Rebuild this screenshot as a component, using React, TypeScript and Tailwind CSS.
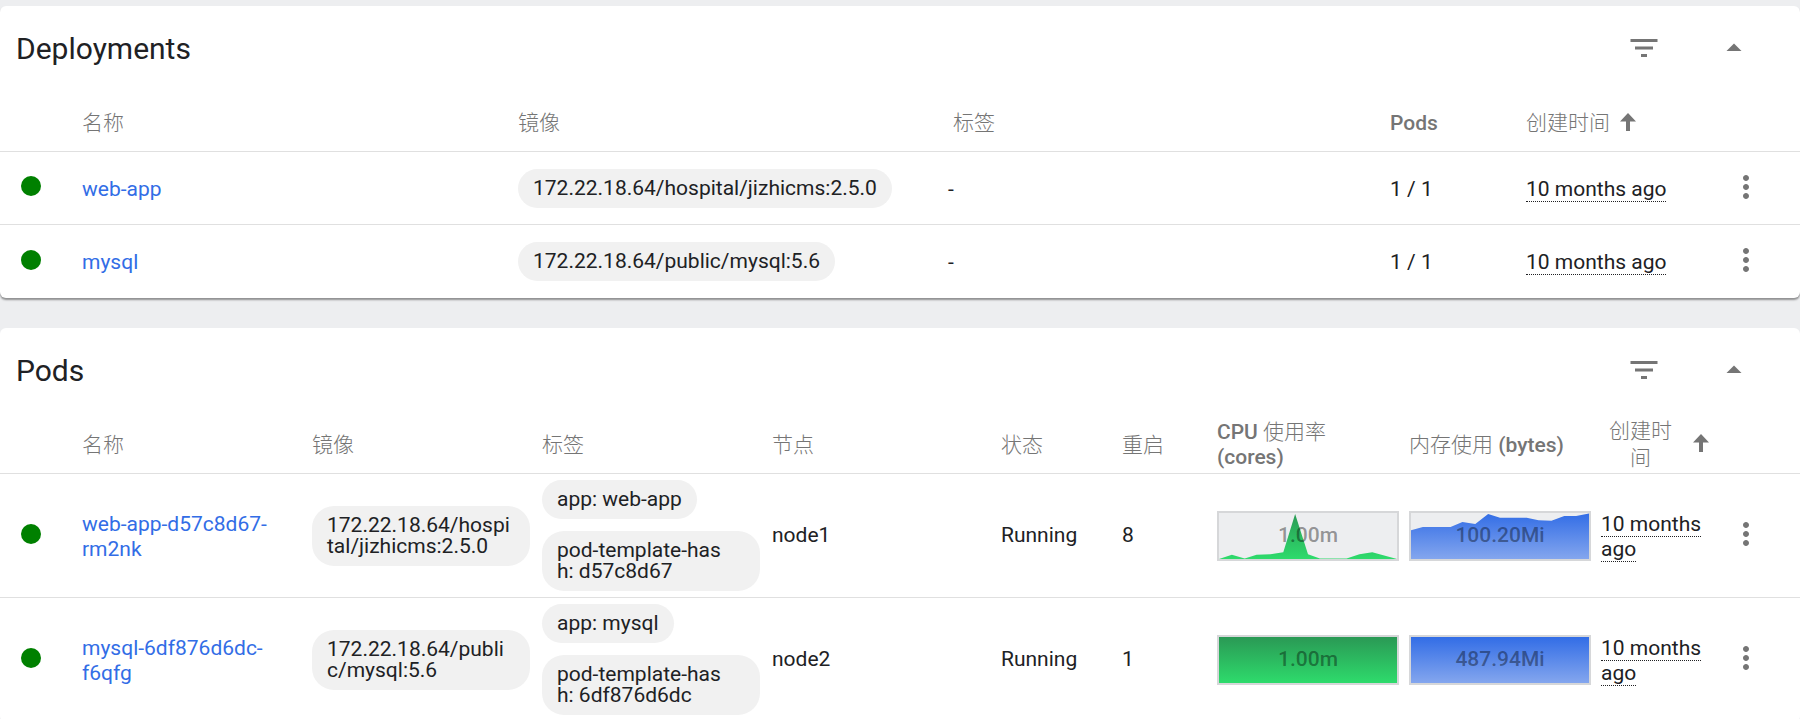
const dividerCls = "border-b border-[#e0e0e0]";
const headCls = "font-medium text-[#757575] pt-[2px]";

const cpuPoints = "0,48 0,48 13,43.5 26,47.5 38,43.5 52,43 65,41 77,1 90,43 102,47.5 129,47.5 142,43 155,41 180,48";
const memPoints = "0,48 0,18 12,14.5 40,14.5 52,9.5 65,11.5 78,1 90,5 117,5 129,7.5 142,8 155,3 167,3 180,0.5 180,48";

function Cjk({ children }: { children: React.ReactNode }) {
  return <span className="font-light">{children}</span>;
}

function Icon({ d, size = 36, className = "" }: { d: string; size?: number; className?: string }) {
  return (
    <svg width={size} height={size} viewBox="0 0 24 24" fill="#757575" className={className}>
      <path d={d} />
    </svg>
  );
}

function SortArrow() {
  return (
    <svg width="16" height="18" viewBox="0 0 16 18" fill="#757575" className="shrink-0 mb-[4px]">
      <path d="M8 0 L16 8.5 H10 V18 H6 V8.5 H0 Z" />
    </svg>
  );
}

function Kebab() {
  return (
    <div className="flex items-center justify-center w-[60px] pb-[3px]">
      <Icon d="M12 8c1.1 0 2-.9 2-2s-.9-2-2-2-2 .9-2 2 .9 2 2 2zm0 2c-1.1 0-2 .9-2 2s.9 2 2 2 2-.9 2-2-.9-2-2-2zm0 6c-1.1 0-2 .9-2 2s.9 2 2 2 2-.9 2-2-.9-2-2-2z" />
    </div>
  );
}

function Dot() {
  return (
    <div className="pl-[21px] pb-[4px]">
      <div className="w-5 h-5 rounded-full bg-[#008000]" />
    </div>
  );
}

function Chip({ children, long }: { children: React.ReactNode; long?: boolean }) {
  return (
    <div className={`${long ? "w-full" : "w-fit"} max-w-full rounded-[22px] bg-[#f1f1f1] px-[15px] py-[9px] text-[21px] leading-[21px] text-[#202124] break-all`}>
      <div className={long ? "max-w-[172px]" : ""}>{children}</div>
    </div>
  );
}

function Ago() {
  return <span className="border-b border-dotted border-[#202124]">10 months ago</span>;
}

function Spark({ value, kind, points }: { value: string; kind: "cpu" | "mem"; points: string }) {
  const id = `${kind}-${value}`;
  const top = kind === "cpu" ? "#2a9955" : "#326de6";
  const bottom = kind === "cpu" ? "#2edb6c" : "#84a6ee";
  return (
    <div className="relative w-[182px] h-[50px] border-2 border-[#d6d7d9] bg-[#edeef0]">
      <svg viewBox="0 0 180 48" preserveAspectRatio="none" className="w-full h-full block">
        <defs>
          <linearGradient id={id} x1="0" y1="0" x2="0" y2="48" gradientUnits="userSpaceOnUse">
            <stop offset="0" stopColor={top} />
            <stop offset="1" stopColor={bottom} />
          </linearGradient>
        </defs>
        <polygon points={points} fill={`url(#${id})`} />
      </svg>
      <div className="absolute inset-0 flex items-center justify-center font-medium text-[21px] text-black/40">{value}</div>
    </div>
  );
}

function CardTitle({ title }: { title: string }) {
  return (
    <div className="flex h-[88px] items-center justify-between pl-4 pb-1">
      <div className="pt-[2px] text-[30px] leading-[36px] text-[#202124]">{title}</div>
      <div className="flex items-center">
        <Icon d="M10 18h4v-2h-4v2zM3 6v2h18V6H3zm3 7h12v-2H6v2z" />
        <Icon className="ml-[54px] mr-[48px]" d="M7 14l5-5 5 5z" />
      </div>
    </div>
  );
}

const deployCols = "grid grid-cols-[82px_436px_430px_442px_136px_190px_1fr] items-center";

function DeploymentRow({ name, image, last }: { name: string; image: string; last?: boolean }) {
  return (
    <div className={`${deployCols} h-[73px] ${last ? "" : dividerCls}`}>
      <Dot />
      <div className="pt-[2px] text-[#326de6]">{name}</div>
      <div><Chip>{image}</Chip></div>
      <div className="pt-[2px]">-</div>
      <div className="pt-[2px]">1 / 1</div>
      <div className="pt-[2px]"><Ago /></div>
      <Kebab />
    </div>
  );
}

const podCols = "grid grid-cols-[82px_230px_230px_230px_229px_121px_95px_192px_192px_115px_1fr] items-center";

function PodRow({ name, image, labels, node, restarts, cpu, mem, cpuPts, memPts }: {
  name: string; image: string; labels: string[]; node: string; restarts: string;
  cpu: string; mem: string; cpuPts: string; memPts: string;
}) {
  return (
    <div className={`${podCols} h-[124px] ${dividerCls}`}>
      <Dot />
      <div className="text-[#326de6] pt-[2px] pr-3">{name}</div>
      <div className="pr-3"><Chip>{image}</Chip></div>
      <div className="flex flex-col gap-3 pr-3">
        {labels.map((l) => <Chip key={l} long={l.length > 20}>{l}</Chip>)}
      </div>
      <div>{node}</div>
      <div>Running</div>
      <div>{restarts}</div>
      <Spark value={cpu} kind="cpu" points={cpuPts} />
      <Spark value={mem} kind="mem" points={memPts} />
      <div className="pt-[2px] pr-2"><Ago /></div>
      <Kebab />
    </div>
  );
}

export default function App() {
  return (
    <div className="h-[719px] overflow-hidden bg-[#edeef0] pt-[6px] text-[21px] leading-[25px] text-[#202124] font-['Roboto','Noto_Sans_CJK_SC',sans-serif]">
      <div className="rounded-md bg-white shadow-[0_2px_2px_rgba(0,0,0,0.4)]">
        <CardTitle title="Deployments" />
        <div className={`${deployCols} h-[58px] ${dividerCls} ${headCls}`}>
          <div />
          <div><Cjk>名称</Cjk></div>
          <div><Cjk>镜像</Cjk></div>
          <div className="pl-[5px]"><Cjk>标签</Cjk></div>
          <div>Pods</div>
          <div className="flex items-center gap-[10px]"><Cjk>创建时间</Cjk><SortArrow /></div>
          <div />
        </div>
        <DeploymentRow name="web-app" image="172.22.18.64/hospital/jizhicms:2.5.0" />
        <DeploymentRow name="mysql" image="172.22.18.64/public/mysql:5.6" last />
      </div>

      <div className="mt-[30px] rounded-md bg-white">
        <CardTitle title="Pods" />
        <div className={`${podCols} h-[58px] ${dividerCls} ${headCls}`}>
          <div />
          <div><Cjk>名称</Cjk></div>
          <div><Cjk>镜像</Cjk></div>
          <div><Cjk>标签</Cjk></div>
          <div><Cjk>节点</Cjk></div>
          <div><Cjk>状态</Cjk></div>
          <div><Cjk>重启</Cjk></div>
          <div className="pr-3">CPU <Cjk>使用率</Cjk> (cores)</div>
          <div><Cjk>内存使用</Cjk> (bytes)</div>
          <div className="flex items-center gap-[21px] pl-2">
            <div className="w-[63px] text-center leading-[27px]"><Cjk>创建时间</Cjk></div>
            <SortArrow />
          </div>
          <div />
          <div />
        </div>
        <PodRow name="web-app-d57c8d67-rm2nk" image="172.22.18.64/hospital/jizhicms:2.5.0"
          labels={["app: web-app", "pod-template-hash: d57c8d67"]} node="node1" restarts="8"
          cpu="1.00m" mem="100.20Mi" cpuPts={cpuPoints} memPts={memPoints} />
        <PodRow name="mysql-6df876d6dc-f6qfg" image="172.22.18.64/public/mysql:5.6"
          labels={["app: mysql", "pod-template-hash: 6df876d6dc"]} node="node2" restarts="1"
          cpu="1.00m" mem="487.94Mi" cpuPts="0,0 180,0 180,48 0,48" memPts="0,0 180,0 180,48 0,48" />
      </div>
    </div>
  );
}
